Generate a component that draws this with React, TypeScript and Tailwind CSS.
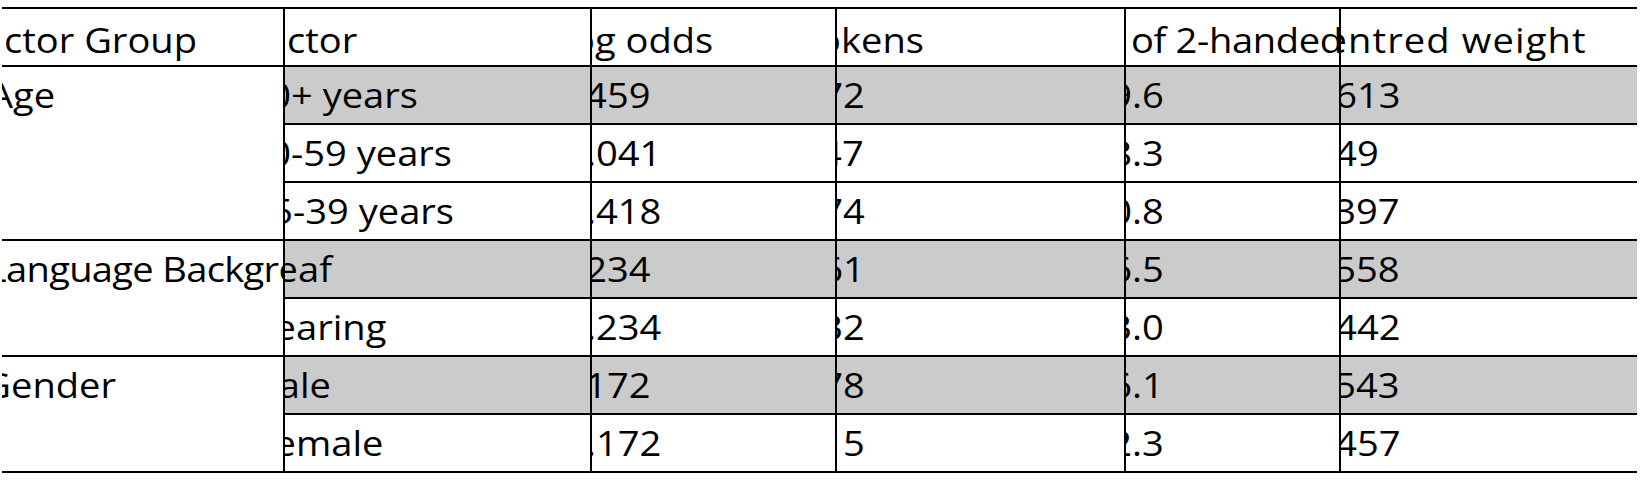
import React from "react";

type Cell = { cut?: string; show?: number; text: string; track?: string };

// the source table is rendered a little wide, so text is stretched on x
const STRETCH = 1.12;

// first column spans several rows
const groups: { label: Cell; span: number }[] = [
  { label: { cut: "A", show: 11, text: "ge" }, span: 3 },
  { label: { cut: "L", show: 4, text: "anguage Background", track: "tracking-[-0.6px]" }, span: 2 },
  { label: { cut: "G", show: 9, text: "ender" }, span: 2 },
];

const header: Cell[] = [
  { cut: "a", show: 2, text: "ctor Group" },
  { cut: "a", show: 2, text: "ctor" },
  { cut: "o", show: 3, text: "g odds" },
  { cut: "o", show: 4, text: "kens" },
  { cut: " ", show: 5, text: "of 2-handed", track: "tracking-[-0.3px]" },
  { cut: "e", show: 7, text: "ntred weight", track: "tracking-[1px]" },
];

const rows: { shaded: boolean; cells: Cell[] }[] = [
  {
    shaded: true,
    cells: [
      { cut: "0", show: 6, text: "+ years" },
      { cut: "4", show: 15, text: "59" },
      { cut: "7", show: 6, text: "2" },
      { cut: "9", show: 6, text: ".6" },
      { cut: "6", show: 16, text: "13" },
    ],
  },
  {
    shaded: false,
    cells: [
      { cut: "0", show: 6, text: "-59 years" },
      { cut: ".", show: 4, text: "041" },
      { cut: "4", show: 5, text: "7" },
      { cut: "8", show: 6, text: ".3" },
      { cut: "4", show: 16, text: "9" },
    ],
  },
  {
    shaded: false,
    cells: [
      { cut: "5", show: 8, text: "-39 years" },
      { cut: ".", show: 4, text: "418" },
      { cut: "7", show: 6, text: "4" },
      { cut: "0", show: 6, text: ".8" },
      { cut: "3", show: 15, text: "97" },
    ],
  },
  {
    shaded: true,
    cells: [
      { cut: "e", show: 13, text: "af" },
      { cut: "2", show: 15, text: "34" },
      { cut: "6", show: 6, text: "1" },
      { cut: "6", show: 6, text: ".5" },
      { cut: "5", show: 15, text: "58" },
    ],
  },
  {
    shaded: false,
    cells: [
      { cut: "e", show: 11, text: "aring" },
      { cut: ".", show: 4, text: "234" },
      { cut: "3", show: 6, text: "2" },
      { cut: "3", show: 6, text: ".0" },
      { cut: "4", show: 16, text: "42" },
    ],
  },
  {
    shaded: true,
    cells: [
      { cut: "a", show: 15, text: "le" },
      { cut: "1", show: 15, text: "72" },
      { cut: "7", show: 6, text: "8" },
      { cut: "6", show: 6, text: ".1" },
      { cut: "5", show: 15, text: "43" },
    ],
  },
  {
    shaded: false,
    cells: [
      { cut: "e", show: 11, text: "male" },
      { cut: ".", show: 4, text: "172" },
      { cut: "1", show: 6, text: "5" },
      { cut: "2", show: 6, text: ".3" },
      { cut: "4", show: 16, text: "57" },
    ],
  },
];

// which data row each group label starts on
const groupStart = [0, 3, 5];

function CellText({ cell, head }: { cell: Cell; head?: boolean }) {
  return (
    <div
      className={`flex h-full items-center overflow-hidden whitespace-nowrap ${head ? "pt-[5px]" : ""}`}
    >
      <div className={`flex shrink-0 origin-left scale-x-[1.12] items-center ${cell.track ?? ""}`}>
        {cell.cut && (
          <span
            className="flex shrink-0 justify-end overflow-hidden whitespace-pre"
            style={{ width: (cell.show ?? 0) / STRETCH }}
          >
            {cell.cut}
          </span>
        )}
        <span>{cell.text}</span>
      </div>
    </div>
  );
}

export default function App() {
  return (
    <div className="min-h-[480px] w-full bg-white pt-[7px] text-[34px] leading-none text-black font-['Open_Sans',sans-serif]">
      <div className="ml-[2px] grid w-[1635px] grid-cols-[281px_307px_245px_289px_215px_298px] border-t-2 border-black">
        {header.map((c, i) => (
          <div
            key={i}
            className={`h-[58px] border-b-2 border-black ${i > 0 ? "border-l-2" : ""}`}
          >
            <CellText cell={c} head />
          </div>
        ))}

        {rows.map((row, r) => {
          const g = groupStart.indexOf(r);
          return (
            <React.Fragment key={r}>
              {g >= 0 && (
                <div
                  className={`border-b-2 border-black ${groups[g].span === 3 ? "row-span-3" : "row-span-2"}`}
                >
                  <div className="h-[56px]">
                    <CellText cell={groups[g].label} />
                  </div>
                </div>
              )}
              {row.cells.map((c, i) => (
                <div
                  key={i}
                  className={`h-[58px] border-b-2 border-l-2 border-black ${row.shaded ? "bg-[#cbcbcb]" : "bg-white"}`}
                >
                  <CellText cell={c} />
                </div>
              ))}
            </React.Fragment>
          );
        })}
      </div>
    </div>
  );
}
